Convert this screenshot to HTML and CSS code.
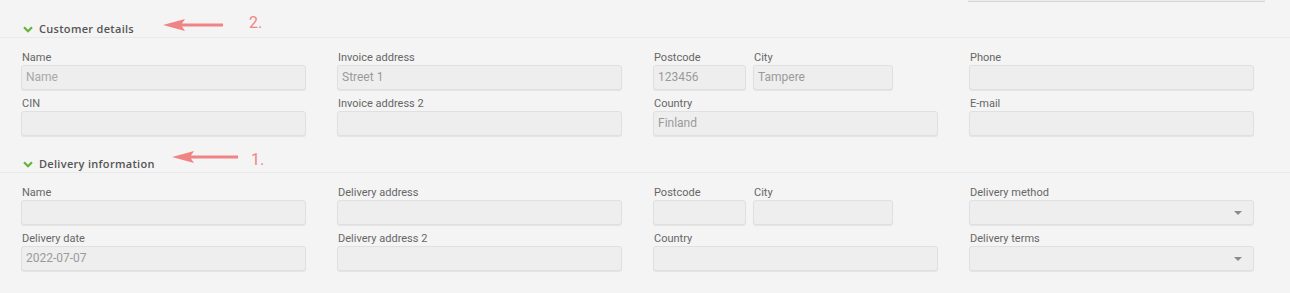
FILE: index.html
```html
<!DOCTYPE html>
<html>
<head>
<meta charset="utf-8">
<link rel="stylesheet" href="styles.css">
</head>
<body>
<div class="top-strip"><div class="top-input"></div></div>

<section class="section first">
  <div class="section-head">
    <svg class="chev" width="10" height="7" viewBox="0 0 10 7"><path d="M1 1.2 L5 5.2 L9 1.2" fill="none" stroke="#62b33a" stroke-width="2.2"/></svg>
    <span class="title">Customer details</span>
    <div class="note note-2">
      <svg width="62" height="14" viewBox="0 0 62 14"><path d="M0 7 L22 1 L19 5.6 L60 5.6 L60 8.6 L19 8.6 L22 13 Z" fill="#f08484"/></svg>
      <span class="num">2.</span>
    </div>
  </div>
  <div class="grid">
    <div class="field">
      <label>Name</label>
      <div class="input placeholder">Name</div>
    </div>
    <div class="field">
      <label>Invoice address</label>
      <div class="input">Street 1</div>
    </div>
    <div class="split">
      <div class="field post">
        <label>Postcode</label>
        <div class="input">123456</div>
      </div>
      <div class="field city">
        <label>City</label>
        <div class="input">Tampere</div>
      </div>
    </div>
    <div class="field">
      <label>Phone</label>
      <div class="input"></div>
    </div>

    <div class="field">
      <label>CIN</label>
      <div class="input"></div>
    </div>
    <div class="field">
      <label>Invoice address 2</label>
      <div class="input"></div>
    </div>
    <div class="field">
      <label>Country</label>
      <div class="input">Finland</div>
    </div>
    <div class="field">
      <label>E-mail</label>
      <div class="input"></div>
    </div>
  </div>
</section>

<section class="section second">
  <div class="section-head">
    <svg class="chev" width="10" height="7" viewBox="0 0 10 7"><path d="M1 1.2 L5 5.2 L9 1.2" fill="none" stroke="#62b33a" stroke-width="2.2"/></svg>
    <span class="title">Delivery information</span>
    <div class="note note-1">
      <svg width="68" height="14" viewBox="0 0 68 14"><path d="M0 7 L22 1 L19 5.6 L66 5.6 L66 8.6 L19 8.6 L22 13 Z" fill="#f08484"/></svg>
      <span class="num">1.</span>
    </div>
  </div>
  <div class="grid">
    <div class="field">
      <label>Name</label>
      <div class="input"></div>
    </div>
    <div class="field">
      <label>Delivery address</label>
      <div class="input"></div>
    </div>
    <div class="split">
      <div class="field post">
        <label>Postcode</label>
        <div class="input"></div>
      </div>
      <div class="field city">
        <label>City</label>
        <div class="input"></div>
      </div>
    </div>
    <div class="field">
      <label>Delivery method</label>
      <div class="input select"><span class="caret"></span></div>
    </div>

    <div class="field">
      <label>Delivery date</label>
      <div class="input">2022-07-07</div>
    </div>
    <div class="field">
      <label>Delivery address 2</label>
      <div class="input"></div>
    </div>
    <div class="field">
      <label>Country</label>
      <div class="input"></div>
    </div>
    <div class="field">
      <label>Delivery terms</label>
      <div class="input select"><span class="caret"></span></div>
    </div>
  </div>
</section>
</body>
</html>
```

FILE: styles.css
```css
html, body {
  margin: 0;
  padding: 0;
  background: #f4f4f4;
  font-family: Roboto, "Liberation Sans", Arial, sans-serif;
  width: 1290px;
  height: 293px;
  overflow: hidden;
}

.top-strip {
  height: 2px;
  padding-left: 968px;
}
.top-input {
  width: 297px;
  height: 1px;
  border-bottom: 1px solid #d6d6d6;
  background: #ececec;
}

.section-head {
  position: relative;
  display: flex;
  align-items: center;
  height: 17px;
  padding-left: 23px;
  border-bottom: 1px solid #e9e9e9;
}
.first .section-head { margin-top: 18px; }
.second .section-head { margin-top: 19px; }

.chev {
  margin-right: 6px;
  margin-top: 1px;
}
.title {
  font-family: "Open Sans", "Noto Sans", sans-serif;
  font-weight: 600;
  font-size: 11px;
  color: #555;
  letter-spacing: 0.3px;
}

.note {
  position: absolute;
  display: flex;
  align-items: center;
}
.note-2 { left: 163px; top: -3px; }
.note-1 { left: 172px; top: -10px; }
.note .num {
  font-family: Roboto, sans-serif;
  font-size: 16px;
  color: #f08484;
}
.note-2 .num { margin-top: -4px; margin-left: 24px; }
.note-1 .num { margin-top: 5px; margin-left: 11px; }

.grid {
  display: grid;
  grid-template-columns: repeat(4, 285px);
  column-gap: 31px;
  row-gap: 7px;
  padding: 13px 0 0 21px;
}

.split {
  display: flex;
  gap: 7px;
}
.post { width: 93px; }
.city { width: 140px; }

.field label {
  display: block;
  font-size: 11px;
  line-height: 14px;
  color: #666;
  padding-left: 1px;
}

.input {
  position: relative;
  box-sizing: border-box;
  height: 25px;
  background: #eeeeee;
  border: 1px solid #e0e0e0;
  border-radius: 3px;
  box-shadow: 0 1px 1px rgba(0, 0, 0, 0.07);
  font-size: 12px;
  line-height: 23px;
  color: #9a9a9a;
  padding-left: 4px;
}
.input.placeholder { color: #a8a8a8; }

.caret {
  position: absolute;
  right: 11px;
  top: 10px;
  width: 0;
  height: 0;
  border-left: 4px solid transparent;
  border-right: 4px solid transparent;
  border-top: 4px solid #8a8a8a;
}
```
